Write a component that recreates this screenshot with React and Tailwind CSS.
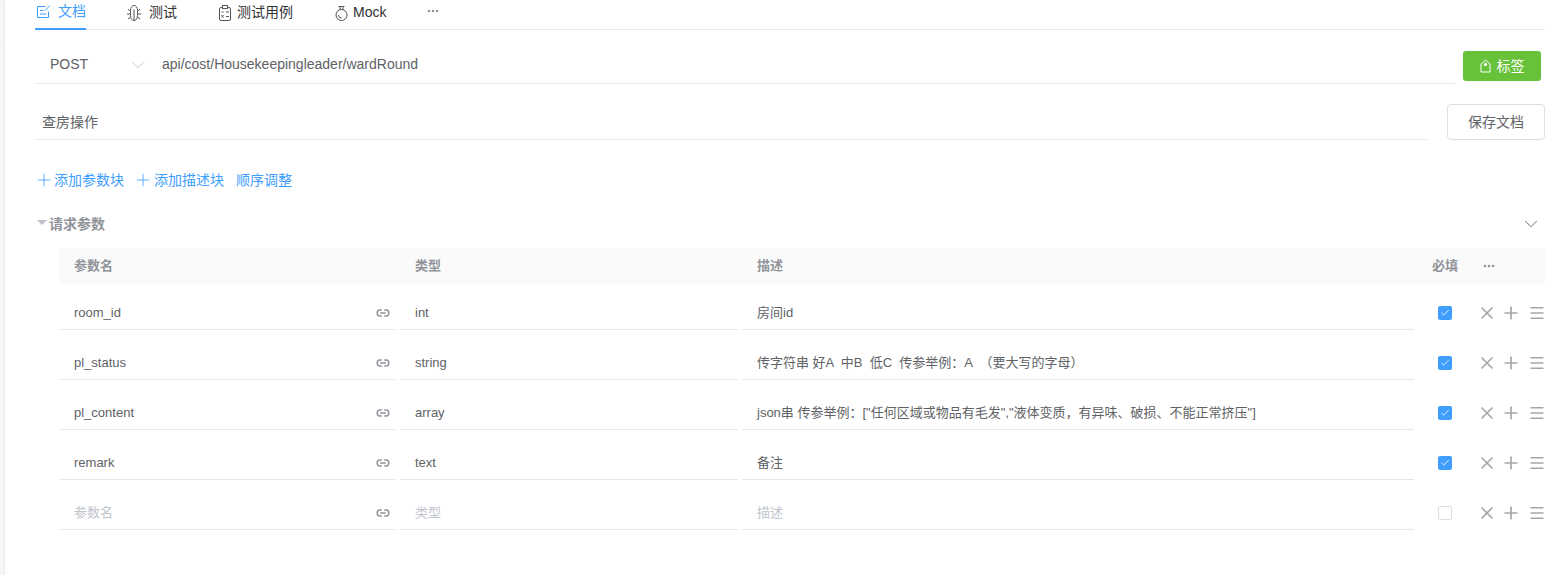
import { ChevronDown, Ellipsis, Link2, Plus, X, Menu, Check } from 'lucide-react'

const FONT = "[font-family:'Liberation_Sans','Noto_Sans_CJK_SC',sans-serif]"

const params = [
  { name: 'room_id', type: 'int', desc: '房间id', checked: true },
  { name: 'pl_status', type: 'string', desc: '传字符串 好A  中B  低C  传参举例：A  （要大写的字母）', checked: true },
  { name: 'pl_content', type: 'array', desc: 'json串 传参举例：["任何区域或物品有毛发","液体变质，有异味、破损、不能正常挤压"]', checked: true },
  { name: 'remark', type: 'text', desc: '备注', checked: true },
  { name: '', type: '', desc: '', checked: false },
]

function DocIcon() {
  return (
    <svg width="14" height="15" viewBox="0 0 14 15" fill="none" stroke="#409eff" strokeWidth="1">
      <path d="M11.500 7.500v6h-11V2.500h8" />
      <path d="M3 6.500h3.500M3 10h6.500M8 6.500l5-5" />
    </svg>
  )
}

function BugIcon() {
  return (
    <svg width="14" height="16" viewBox="0 0 14 16" fill="none" stroke="#555" strokeWidth="1">
      <path d="M3.500 5.500c0-3 1.500-5 3.500-5s3.500 2 3.500 5v5c0 3-1.500 5-3.500 5s-3.500-2-3.500-5z" />
      <path d="M7 4.500v11M1 4l2.500 2.500M13 4l-2.500 2.500M0 9h3.500M14 9h-3.500M1 14l2.500-2M13 14l-2.500-2" />
    </svg>
  )
}

function CaseIcon() {
  return (
    <svg width="14" height="16" viewBox="0 0 14 16" fill="none" stroke="#555" strokeWidth="1">
      <rect x="1.500" y="2.500" width="11" height="13" rx="1.500" />
      <rect x="4.500" y="0.500" width="5" height="3" fill="#fff" />
      <path d="M3.500 7h2M8 7h3M8 11.500h3M3.500 10l2 2.500M5.500 10l-2 2.500" />
    </svg>
  )
}

function FlaskIcon() {
  return (
    <svg width="13" height="16" viewBox="0 0 13 16" fill="none" stroke="#555" strokeWidth="1">
      <path d="M3.500 1.500h6M5 1.500v3.500M8 1.500v3.500" />
      <circle cx="6.500" cy="10" r="5.500" />
      <path d="M3.500 10a3 3 0 0 0 3 3" />
    </svg>
  )
}

function TagIcon() {
  return (
    <svg width="11" height="14" viewBox="0 0 11 14" fill="none" stroke="#fff" strokeWidth="1">
      <path d="M1 5l4.500-4L10 5v8H1z" />
      <circle cx="5.500" cy="5.500" r="1.200" fill="#fff" />
    </svg>
  )
}

function Tab({ icon, label, active, className }) {
  return (
    <div
      className={`flex h-[30px] items-center pb-[5px] ${active ? 'border-b-[2px] border-[#409eff] text-[#409eff]' : 'text-[#303133]'} ${className}`}
    >
      {icon}
      <span>{label}</span>
    </div>
  )
}

function Row({ row }) {
  return (
    <div className="flex h-[50px] items-start pl-[59px] text-[13px]">
      <div className={`flex h-[42px] w-[336px] items-center justify-between border-b border-[#e4e7ed] pl-[15px] pr-[5px] pt-[8px] ${row.name ? 'text-[#606266]' : 'text-[#c0c4cc]'}`}>
        <span>{row.name || '参数名'}</span>
        <Link2 size={14} strokeWidth={2.5} className="text-[#909399]" />
      </div>
      <div className={`ml-[5px] flex h-[42px] w-[337px] items-center border-b border-[#e4e7ed] pl-[15px] pt-[8px] ${row.type ? 'text-[#606266]' : 'text-[#c0c4cc]'}`}>
        {row.type || '类型'}
      </div>
      <div className={`ml-[5px] flex h-[42px] w-[672px] items-center whitespace-pre border-b border-[#e4e7ed] pl-[15px] pt-[8px] ${row.desc ? 'text-[#606266]' : 'text-[#c0c4cc]'}`}>
        {row.desc || '描述'}
      </div>
      <div className="ml-[24px] flex h-[50px] items-center">
        {row.checked ? (
          <span className="flex h-[14px] w-[14px] items-center justify-center rounded-[2px] bg-[#409eff]">
            <Check size={10} strokeWidth={2} className="text-white" />
          </span>
        ) : (
          <span className="h-[14px] w-[14px] rounded-[2px] border border-[#dcdfe6] bg-white" />
        )}
      </div>
      <div className="ml-[25px] flex h-[50px] items-center text-[#a6a6a6]">
        <X size={20} strokeWidth={2} />
        <Plus size={20} strokeWidth={2} className="ml-[4px]" />
        <Menu size={18} strokeWidth={1.8} className="ml-[7px]" />
      </div>
    </div>
  )
}

export default function App() {
  return (
    <div className={`relative h-[575px] w-[1568px] overflow-hidden bg-white text-[14px] ${FONT}`}>
      {/* edge of the sidebar behind this panel */}
      <div className="absolute bottom-0 left-0 top-0 w-[5px] border-r border-[#e9ebef] bg-[#f5f6f8] pt-[5px]">
        <div className="h-px bg-[#ebedf0]" />
        <div className="mt-[38px] h-px bg-[#ebedf0]" />
      </div>

      <div className="ml-[35px] mr-[23px] flex h-[30px] items-start border-b border-[#e4e7ed]">
        <Tab active icon={<DocIcon />} label="文档" className="w-[51px] gap-[7px] pl-[2px]" />
        <Tab icon={<BugIcon />} label="测试" className="ml-[41px] gap-[8px]" />
        <Tab icon={<CaseIcon />} label="测试用例" className="ml-[41px] gap-[5px]" />
        <Tab icon={<FlaskIcon />} label="Mock" className="ml-[42px] gap-[5px]" />
        <Ellipsis size={14} strokeWidth={2.5} className="ml-[40px] mt-[4px] text-[#909399]" />
      </div>

      <div className="ml-[35px] mr-[23px] flex items-start">
        <div className="mt-[19px] flex h-[35px] w-[1420px] items-center border-b border-[#e4e7ed] pb-[3px] text-[#606266]">
          <span className="ml-[15px] w-[77px]">POST</span>
          <ChevronDown size={22} strokeWidth={1} className="text-[#c0c4cc]" />
          <span className="ml-[13px]">api/cost/Housekeepingleader/wardRound</span>
        </div>
        <button className="ml-[8px] mt-[21px] flex h-[30px] w-[78px] items-center justify-center gap-[6px] rounded-[3px] bg-[#67c23a] text-white">
          <TagIcon />
          标签
        </button>
      </div>

      <div className="ml-[35px] mr-[23px] mt-[1px] flex items-start">
        <div className="mt-[19px] flex h-[36px] w-[1392px] items-center border-b border-[#e4e7ed] pl-[7px] pt-[1px] text-[#606266]">
          查房操作
        </div>
        <button className="ml-[20px] mt-[19px] h-[36px] w-[98px] rounded-[4px] border border-[#dcdfe6] bg-white text-[#606266]">
          保存文档
        </button>
      </div>

      <div className="ml-[34px] mt-[30px] flex h-[20px] items-center text-[#409eff]">
        <Plus size={20} strokeWidth={1} />
        <span>添加参数块</span>
        <Plus size={20} strokeWidth={1} className="ml-[9px]" />
        <span className="ml-[1px]">添加描述块</span>
        <span className="ml-[12px]">顺序调整</span>
      </div>

      <div className="ml-[37px] mr-[26px] mt-[24px] flex h-[20px] items-center justify-between">
        <div className="flex items-center font-bold text-[#909399]">
          <span className="mr-[2px] mt-[-3px] h-0 w-0 border-x-[5px] border-t-[5px] border-x-transparent border-t-[#c0c4cc]" />
          请求参数
        </div>
        <ChevronDown size={22} strokeWidth={1} className="text-[#606266]" />
      </div>

      <div className="ml-[59px] mr-[23px] mt-[14px] flex h-[36px] items-center bg-[#fafafa] text-[13px] font-bold text-[#909399]">
        <span className="ml-[15px] w-[341px]">参数名</span>
        <span className="w-[342px]">类型</span>
        <span className="w-[675px]">描述</span>
        <span>必填</span>
        <Ellipsis size={14} strokeWidth={2.5} className="ml-[24px]" />
      </div>

      <div className="mt-[4px]">
        {params.map((row, i) => (
          <Row key={`param-${i}`} row={row} />
        ))}
      </div>
    </div>
  )
}
